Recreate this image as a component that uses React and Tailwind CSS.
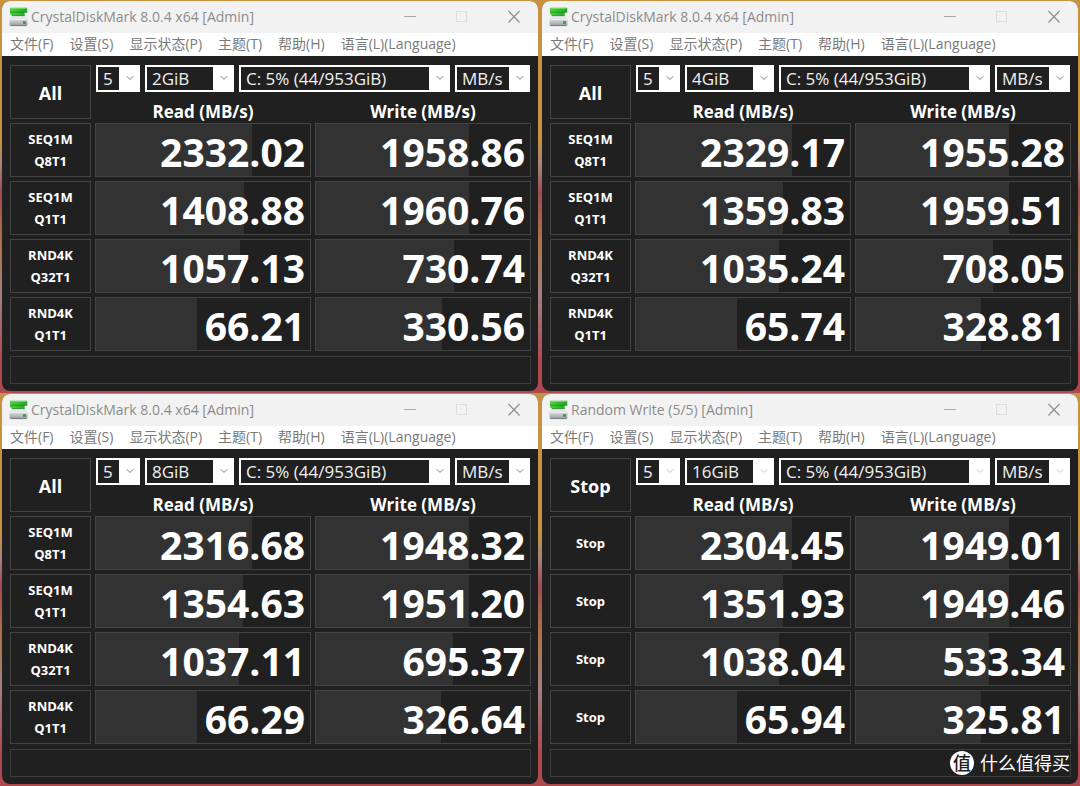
import React from 'react';
import { ChevronDown } from 'lucide-react';

const MENU = ['文件(F)', '设置(S)', '显示状态(P)', '主题(T)', '帮助(H)', '语言(L)(Language)'];
const TESTS = ['SEQ1M Q8T1', 'SEQ1M Q1T1', 'RND4K Q32T1', 'RND4K Q1T1'];

const WINDOWS = [
  {
    title: 'CrystalDiskMark 8.0.4 x64 [Admin]',
    size: '2GiB',
    results: [['2332.02', '1958.86'], ['1408.88', '1960.76'], ['1057.13', '730.74'], ['66.21', '330.56']],
  },
  {
    title: 'CrystalDiskMark 8.0.4 x64 [Admin]',
    size: '4GiB',
    results: [['2329.17', '1955.28'], ['1359.83', '1959.51'], ['1035.24', '708.05'], ['65.74', '328.81']],
  },
  {
    title: 'CrystalDiskMark 8.0.4 x64 [Admin]',
    size: '8GiB',
    results: [['2316.68', '1948.32'], ['1354.63', '1951.20'], ['1037.11', '695.37'], ['66.29', '326.64']],
  },
  {
    title: 'Random Write (5/5) [Admin]',
    size: '16GiB',
    running: true,
    results: [['2304.45', '1949.01'], ['1351.93', '1949.46'], ['1038.04', '533.34'], ['65.94', '325.81']],
  },
];

// Meter is logarithmic: 0.1 MB/s is empty, 100000 MB/s is full
const meterWidth = (score) => `${(Math.log10(Number(score) * 10) / 6) * 100}%`;

const DiskIcon = () => (
  <svg width="19" height="20" viewBox="0 0 19 20" className="shrink-0" aria-hidden="true">
    <defs>
      <linearGradient id="drive" x1="0" y1="0" x2="0" y2="1">
        <stop offset="0" stopColor="#dfe1e5" />
        <stop offset="1" stopColor="#96999f" />
      </linearGradient>
      <linearGradient id="stripe" x1="0" y1="0" x2="1" y2="0">
        <stop offset="0" stopColor="#52cf40" />
        <stop offset="1" stopColor="#1fa426" />
      </linearGradient>
    </defs>
    <path d="M2.4 8.6h14l2 4.8H.6z" fill="#e4e6e9" />
    <path d="M1 .8h17.2v4.6H15.6V8.8H3L1 7z" fill="url(#stripe)" />
    <path d="M2 1.6h15.4" stroke="#7fe66c" strokeWidth="0.8" />
    <path d="M1 5.2h17.2M3 8.6h12.6" stroke="#128a1c" strokeWidth="0.7" />
    <rect x=".5" y="11.6" width="18" height="7.4" rx="1.4" fill="url(#drive)" />
    <path d="M1.4 12.4h16.2" stroke="#f4f5f6" strokeWidth="0.8" />
    <path d="M1.4 18.6h16.2" stroke="#73767b" strokeWidth="0.9" />
    <rect x="14" y="14.2" width="3" height="2.6" fill="#3c9b42" />
  </svg>
);

const TitleBar = ({ title }) => (
  <header className="flex h-8 items-center bg-[#f2f2f2] pl-[7px] pr-4 text-[#8c8c8c]">
    <DiskIcon />
    <h2 className="ml-[3px] flex-1 whitespace-nowrap text-[14px] leading-5">{title}</h2>
    <div className="flex items-center gap-9">
      <button type="button" aria-label="Minimize" className="h-4 w-4">
        <svg width="16" height="16" viewBox="0 0 16 16"><path d="M2 7.5h12" stroke="#a8a8a8" /></svg>
      </button>
      <button type="button" aria-label="Maximize" className="h-4 w-4" disabled>
        <svg width="16" height="16" viewBox="0 0 16 16"><rect x="2.5" y="2.5" width="10" height="10" fill="none" stroke="#dedede" /></svg>
      </button>
      <button type="button" aria-label="Close" className="h-4 w-4">
        <svg width="16" height="16" viewBox="0 0 16 16"><path d="M2.5 2l11 11.5M13.5 2L2.5 13.5" stroke="#8f8f8f" strokeWidth="1.2" /></svg>
      </button>
    </div>
  </header>
);

const Combo = ({ label, value, running, className }) => (
  <div className={`relative ${className}`}>
    <select
      aria-label={label}
      defaultValue={value}
      className="block h-[27px] w-full appearance-none border-2 border-r-[21px] border-white bg-[#202020] pl-[5px] text-[17px] leading-[22px] text-[#f0f0f0] outline-none"
    >
      <option>{value}</option>
    </select>
    <ChevronDown
      size={12}
      strokeWidth={2}
      className={`pointer-events-none absolute right-1 top-[7px] ${running ? 'text-[#c4c4c4]' : 'text-[#808080]'}`}
    />
  </div>
);

const Score = ({ value }) => (
  <td className="border border-[#444] bg-[#202020] p-0">
    <div className="relative h-[52px]">
      <div className="h-full bg-[#323232]" style={{ width: meterWidth(value) }} />
      <span className="absolute inset-0 pr-[5px] pt-px text-right text-[39px] font-bold leading-[54px]">{value}</span>
    </div>
  </td>
);

const BenchWindow = ({ title, size, running, results }) => (
  <section className="bg-[linear-gradient(#c8923f,#c8923f_35%,#a58478_42%,#a04c52_49%,#ad7448_62%,#a08080_75%,#b0484f_92%)] px-[2px] pb-[2px] pt-px">
    <div className="overflow-hidden rounded-lg bg-[#202020]">
      <TitleBar title={title} />
      <nav className="flex h-[23px] items-center gap-4 whitespace-nowrap bg-white pb-px pl-2 text-[14px] text-[#7a7a7a]">
        {MENU.map((item) => (
          <button key={item} type="button" className="leading-5">{item}</button>
        ))}
      </nav>
      <div className="pb-[7px] pl-1 pr-[3px] pt-[5px] text-white">
        <table className="w-full table-fixed border-separate border-spacing-1">
          <colgroup>
            <col className="w-[81px]" />
            <col />
            <col />
          </colgroup>
          <thead>
            <tr>
              <th rowSpan={2} className="h-[54px] border border-[#444]">
                <button type="button" className="h-[52px] w-full pt-px text-[18px] font-bold leading-6">
                  {running ? 'Stop' : 'All'}
                </button>
              </th>
              <td colSpan={2} className="h-[27px]">
                <div className="flex gap-[5px] px-px">
                  <Combo label="Count" value="5" running={running} className="w-11" />
                  <Combo label="Size" value={size} running={running} className="w-[89px]" />
                  <Combo label="Drive" value="C: 5% (44/953GiB)" running={running} className="flex-1" />
                  <Combo label="Unit" value="MB/s" running={running} className="w-[75px]" />
                </div>
              </td>
            </tr>
            <tr className="text-[17px] leading-[15px]">
              <th scope="col" className="h-[23px] align-bottom">Read (MB/s)</th>
              <th scope="col" className="h-[23px] align-bottom">Write (MB/s)</th>
            </tr>
          </thead>
          <tbody>
            {TESTS.map((test, i) => (
              <tr key={test}>
                <th scope="row" className="border border-[#444]">
                  <button type="button" className="h-[52px] w-full px-4 text-[13px] font-bold leading-[22px]">
                    {running ? 'Stop' : test}
                  </button>
                </th>
                <Score value={results[i][0]} />
                <Score value={results[i][1]} />
              </tr>
            ))}
          </tbody>
        </table>
        <div className="mx-1 mt-px h-7 border border-[#3c3c3c]" />
      </div>
    </div>
  </section>
);

const Watermark = () => (
  <div className="absolute bottom-[11px] right-[10px] flex items-center gap-[6px] text-white">
    <span className="flex h-6 w-6 items-center justify-center rounded-full bg-white text-[18px] font-medium leading-6 text-[#202020]">值</span>
    <span className="text-[18px] leading-6">什么值得买</span>
  </div>
);

export default function App() {
  return (
    <main className="relative grid grid-cols-2 bg-[#b0484f] font-['Open_Sans','Noto_Sans_CJK_SC',sans-serif]">
      {WINDOWS.map((win) => (
        <BenchWindow key={win.size} {...win} />
      ))}
      <Watermark />
    </main>
  );
}
